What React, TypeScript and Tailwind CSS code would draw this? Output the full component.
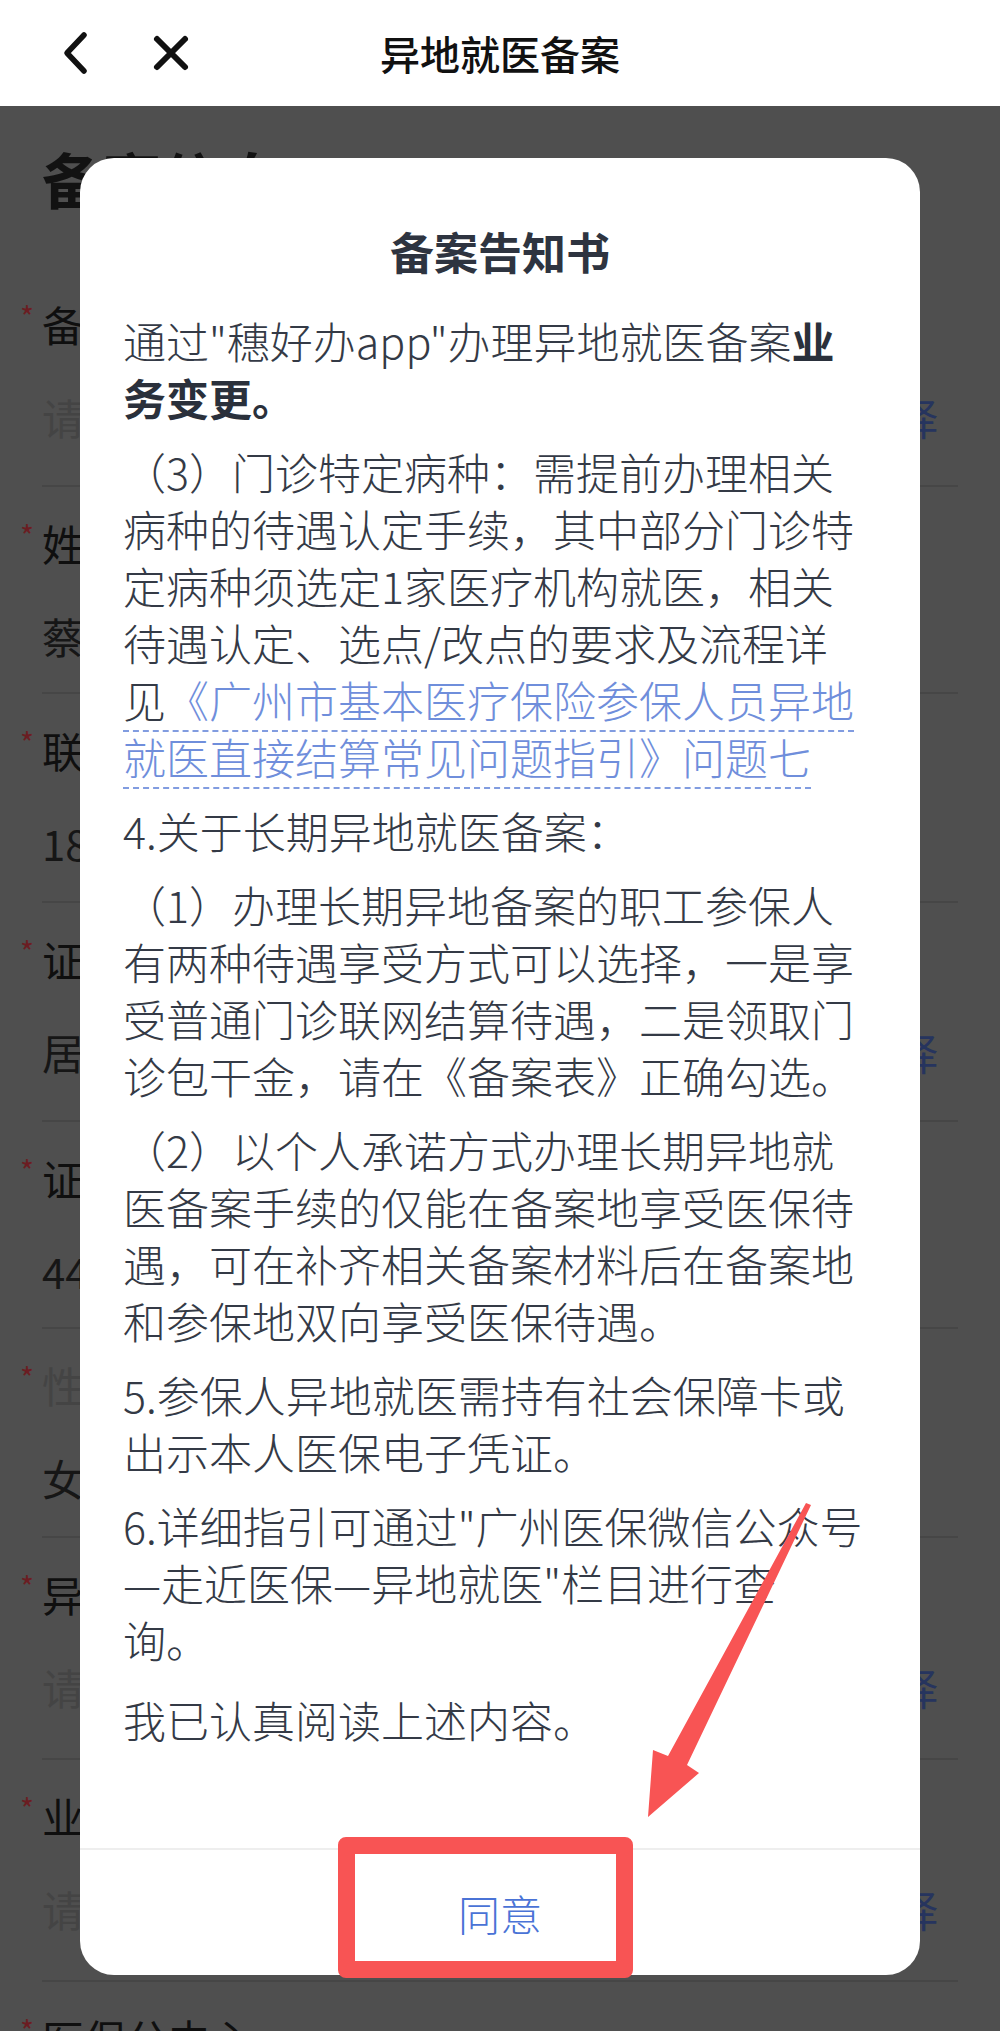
import React from "react";

type RowProps = {
  label: string;
  value: string;
  heightClass: string;
  labelClass?: string;
  valueClass?: string;
  picker?: boolean;
};

function Row({ label, value, heightClass, labelClass, valueClass, picker }: RowProps) {
  return (
    <div className={"flex flex-col border-b-2 border-[#464646] " + heightClass}>
      <div className="mt-[31px] flex h-[50px] items-center leading-[50px]">
        <span className="-ml-[22px] w-[22px] self-start pt-[2px] text-[30px] leading-[30px] text-[#6b1d22]">*</span>
        <span className={"text-[42px] " + (labelClass ?? "text-[#0f0f0f]")}>{label}</span>
      </div>
      <div className="mt-[43px] flex h-[50px] items-center justify-between pr-[20px] leading-[50px]">
        <span className={"text-[42px] " + (valueClass ?? "text-[#161616]")}>{value}</span>
        {picker ? <span className="text-[42px] text-[#26345e]">请选择</span> : null}
      </div>
    </div>
  );
}

export default function App() {
  return (
    <div className="relative h-[2031px] w-[1000px] overflow-hidden bg-[#4f4f4f] font-['Noto_Sans_CJK_SC','Noto_Sans',sans-serif]">
      {/* Top navigation bar */}
      <header className="grid h-[106px] grid-cols-[1fr_auto_1fr] items-center bg-white">
        <div className="flex items-center gap-[61px] pl-[60px]">
          <svg width="30" height="44" viewBox="0 0 30 44" fill="none">
            <path d="M24 4 L7 22 L24 40" stroke="#111111" strokeWidth="5.5" strokeLinecap="round" strokeLinejoin="round" />
          </svg>
          <svg width="40" height="40" viewBox="0 0 40 40" fill="none">
            <path d="M6 6 L34 34 M34 6 L6 34" stroke="#111111" strokeWidth="6" strokeLinecap="round" />
          </svg>
        </div>
        <div className="text-[40px] font-medium leading-none text-[#111111]">异地就医备案</div>
        <div />
      </header>

      {/* Page content (dimmed behind the dialog) */}
      <main className="px-[42px]">
        <h1 className="mt-[32px] text-[60px] font-bold leading-[80px] text-[#121212]">备案信息</h1>
        <div className="mt-[50px]">
          <Row label="备案类型" value="请选择备案类型" valueClass="text-[#444444]" picker heightClass="h-[219px]" />
          <Row label="姓名" value="蔡**" heightClass="h-[207px]" />
          <Row label="联系电话" value="18*********" heightClass="h-[209px]" />
          <Row label="证件类型" value="居民身份证" picker heightClass="h-[219px]" />
          <Row label="证件号码" value="44****************" heightClass="h-[207px]" />
          <Row label="性别" value="女" labelClass="text-[#444444]" heightClass="h-[209px]" />
          <Row label="异地类型" value="请选择异地类型" valueClass="text-[#444444]" picker heightClass="h-[222px]" />
          <Row label="业务类型" value="请选择业务类型" valueClass="text-[#444444]" picker heightClass="h-[222px]" />
          <Row label="医保分中心" value="请选择医保分中心" valueClass="text-[#444444]" picker heightClass="h-[222px]" />
        </div>
      </main>

      {/* Dialog */}
      <div className="absolute left-[80px] top-[158px] flex h-[1817px] w-[840px] flex-col overflow-hidden rounded-[34px] bg-white">
        <div className="pt-[63px] text-center text-[44px] font-bold leading-[60px] text-[#2e3440]">备案告知书</div>
        <div className="mt-[31px] flex-1 whitespace-nowrap pl-[43px] pr-[20px] text-[43px] font-light leading-[57px] text-[#343a46]">
          <p className="mb-[17px]">
            通过"穗好办app"办理异地就医备案<b className="font-bold text-[#2a303b]">业</b>
            <br />
            <b className="font-bold text-[#2a303b]">务变更。</b>
          </p>
          <p className="mb-[17px]">
            （3）门诊特定病种：需提前办理相关
            <br />
            病种的待遇认定手续，其中部分门诊特
            <br />
            定病种须选定1家医疗机构就医，相关
            <br />
            待遇认定、选点/改点的要求及流程详
            <br />
            <span className="border-b-[2.5px] border-dashed border-[#819ce0]">
              见<span className="text-[#6f8edb]">《广州市基本医疗保险参保人员异地</span>
              <br />
              <span className="text-[#6f8edb]">就医直接结算常见问题指引》问题七</span>
            </span>
          </p>
          <p className="mb-[17px]">4.关于长期异地就医备案：</p>
          <p className="mb-[17px]">
            （1）办理长期异地备案的职工参保人
            <br />
            有两种待遇享受方式可以选择，一是享
            <br />
            受普通门诊联网结算待遇，二是领取门
            <br />
            诊包干金，请在《备案表》正确勾选。
          </p>
          <p className="mb-[17px]">
            （2）以个人承诺方式办理长期异地就
            <br />
            医备案手续的仅能在备案地享受医保待
            <br />
            遇，可在补齐相关备案材料后在备案地
            <br />
            和参保地双向享受医保待遇。
          </p>
          <p className="mb-[17px]">
            5.参保人异地就医需持有社会保障卡或
            <br />
            出示本人医保电子凭证。
          </p>
          <p className="mb-[17px]">
            6.详细指引可通过"广州医保微信公众号
            <br />
            —走近医保—异地就医"栏目进行查
            <br />
            询。
          </p>
          <p className="mt-[23px]">我已认真阅读上述内容。</p>
        </div>
        <div className="flex h-[127px] items-center justify-center border-t-2 border-[#eeeeee] text-[42px] font-light text-[#4a73d6]">
          同意
        </div>
      </div>

      {/* Annotation: red frame around the button */}
      <div className="absolute left-[338px] top-[1837px] h-[141px] w-[295px] rounded-[8px] border-[17px] border-[#f85454]" />

      {/* Annotation: red arrow */}
      <svg className="pointer-events-none absolute left-0 top-0" width="1000" height="2031" viewBox="0 0 1000 2031">
        <polygon
          points="806,1503 668,1756 653,1750 648,1817 699,1773 687,1765 811,1505"
          fill="#f85454"
        />
      </svg>
    </div>
  );
}
